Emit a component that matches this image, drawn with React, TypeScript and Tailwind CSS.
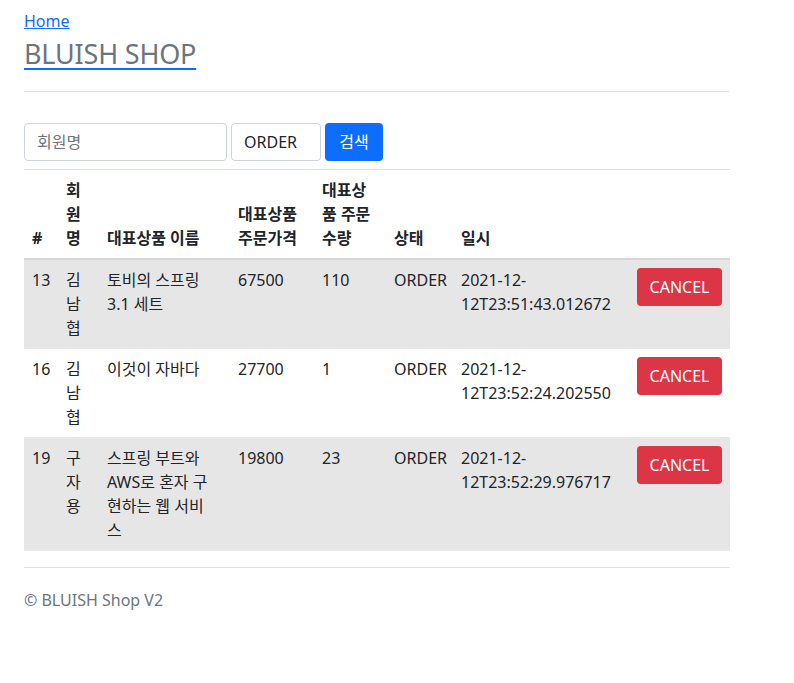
const orders = [
  { id: 13, member: '김남협', item: '토비의 스프링 3.1 세트', price: 67500, count: 110, status: 'ORDER', date: '2021-12-12T23:51:43.012672' },
  { id: 16, member: '김남협', item: '이것이 자바다', price: 27700, count: 1, status: 'ORDER', date: '2021-12-12T23:52:24.202550' },
  { id: 19, member: '구자용', item: '스프링 부트와 AWS로 혼자 구현하는 웹 서비스', price: 19800, count: 23, status: 'ORDER', date: '2021-12-12T23:52:29.976717' },
];

export default function App() {
  return (
    <div
      className="min-h-screen bg-white text-[16px] leading-6 text-[#212529]"
      style={{ fontFamily: '"Noto Sans", "Noto Sans CJK KR", sans-serif' }}
    >
      <div className="w-[706px] ml-6">
        {/* 헤더 */}
        <div className="pt-[9px]">
          <a href="#" className="text-[#0d6efd] underline">Home</a>
        </div>
        <h3 className="mt-[4px] text-[27px] leading-[34px] tracking-[-0.2px]">
          <a href="#" className="text-[#6c757d] underline decoration-[#0d6efd] decoration-2 underline-offset-[4px]">
            BLUISH SHOP
          </a>
        </h3>
        <hr className="mt-[20px] border-[#dee2e6]" />

        {/* 검색 폼 */}
        <form className="mt-[31px] flex gap-1 pb-2">
          <input
            placeholder="회원명"
            className="w-[203px] h-[38px] px-3 border border-[#ced4da] rounded-[4px] placeholder:text-[#6c757d] outline-none"
          />
          <div className="w-[90px] h-[38px] px-3 flex items-center border border-[#ced4da] rounded-[4px]">ORDER</div>
          <button type="button" className="w-[58px] h-[38px] bg-[#0d6efd] text-white rounded-[4px]">검색</button>
        </form>

        {/* 주문 목록 */}
        <table className="w-[706px] table-fixed border-collapse">
          <colgroup>
            <col className="w-[34px]" />
            <col className="w-[41px]" />
            <col className="w-[131px]" />
            <col className="w-[84px]" />
            <col className="w-[72px]" />
            <col className="w-[67px]" />
            <col className="w-[176px]" />
            <col className="w-[101px]" />
          </colgroup>
          <thead>
            <tr className="border-t border-[#dee2e6] border-b-2 border-b-[#d6d6d6] font-bold align-bottom text-left">
              <th className="p-2">#</th>
              <th className="p-2">회원명</th>
              <th className="p-2">대표상품 이름</th>
              <th className="p-2">대표상품 주문가격</th>
              <th className="p-2">대표상품 주문수량</th>
              <th className="p-2">상태</th>
              <th className="p-2">일시</th>
              <th className="p-2"></th>
            </tr>
          </thead>
          <tbody>
            {orders.map((o, idx) => (
              <tr
                key={o.id}
                className={`align-top border-b border-[#e9e9e9] ${idx % 2 === 0 ? 'bg-[#e6e6e6]' : 'bg-white'}`}
              >
                <td className="p-2">{o.id}</td>
                <td className="p-2">{o.member}</td>
                <td className="p-2">
                  <div className="w-[104px]">{o.item}</div>
                </td>
                <td className="p-2">{o.price}</td>
                <td className="p-2">{o.count}</td>
                <td className="p-2">{o.status}</td>
                <td className="p-2">{o.date}</td>
                <td className="p-2">
                  <button type="button" className="w-[85px] h-[38px] bg-[#dc3545] text-white rounded-[4px]">
                    CANCEL
                  </button>
                </td>
              </tr>
            ))}
          </tbody>
        </table>

        {/* 푸터 */}
        <hr className="mt-4 border-[#dee2e6]" />
        <footer className="mt-5 text-[#6c757d]">© BLUISH Shop V2</footer>
      </div>
    </div>
  );
}
